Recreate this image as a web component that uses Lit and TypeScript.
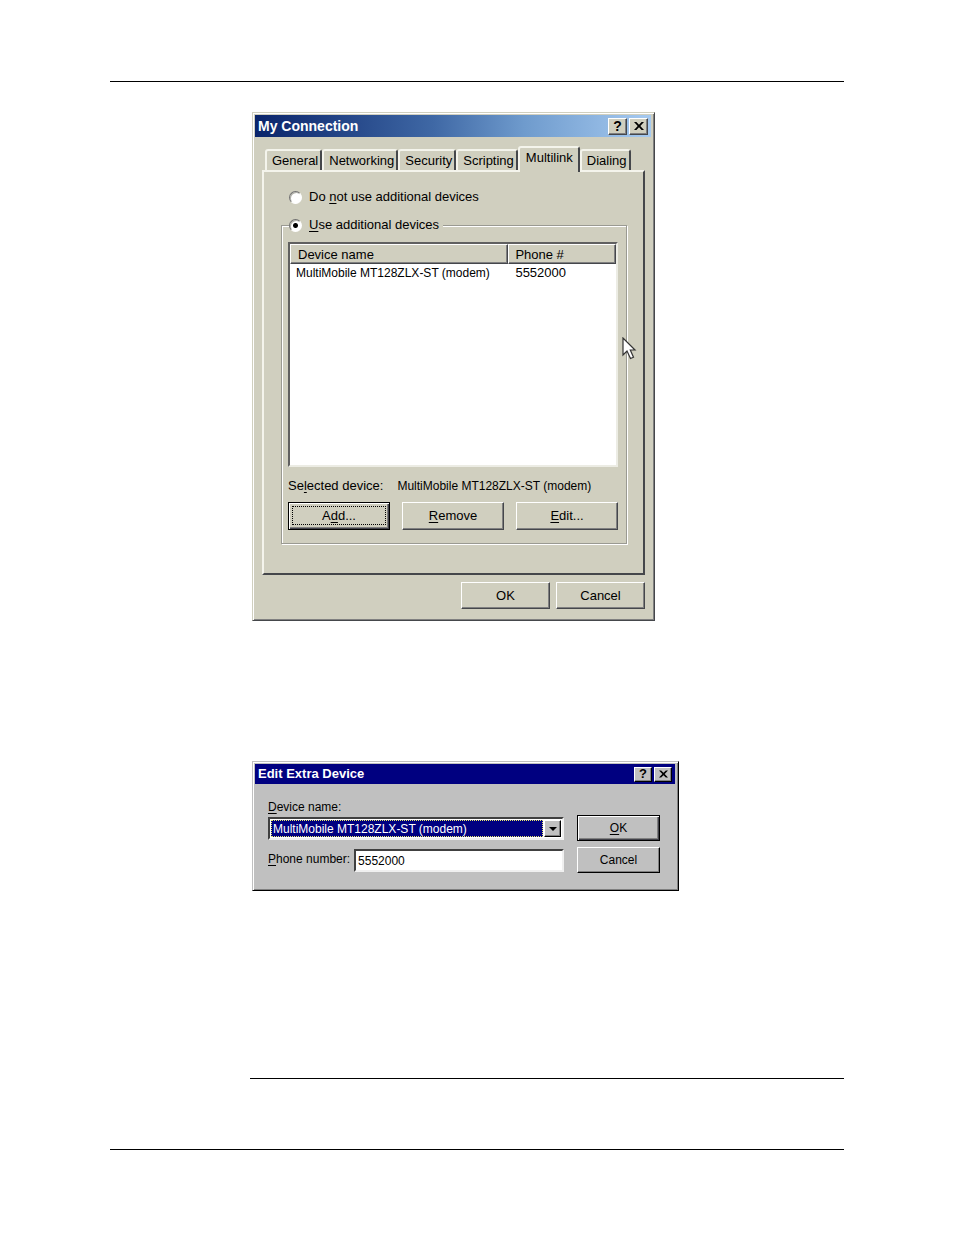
import { LitElement, html, css } from "lit";
import { customElement, state } from "lit/decorators.js";

const TABS = ["General", "Networking", "Security", "Scripting", "Multilink", "Dialing"];
const DEVICE = "MultiMobile MT128ZLX-ST (modem)";
const PHONE = "5552000";

const closeIcon = html`<svg class="x" viewBox="0 0 10 8" width="10" height="8" aria-hidden="true">
  <path d="M0 0h2.4L5 2.7 7.6 0H10L6.3 4 10 8H7.6L5 5.3 2.4 8H0L3.7 4z" fill="currentColor" /></svg>`;

const common = css`
  * { box-sizing: border-box; }
  :host {
    display: block;
    font-family: "Liberation Sans", Arial, sans-serif;
    color: #000;
  }
  button { font: inherit; color: inherit; margin: 0; padding: 0; }
  u { text-underline-offset: 2px; text-decoration-thickness: 1px; text-decoration-skip-ink: none; }
  .dialog {
    position: relative;
    background: var(--face);
    border: 1px solid;
    border-color: var(--face) var(--edge) var(--edge) var(--face);
    box-shadow: inset 1px 1px #fff, inset -1px -1px #808080;
    padding: 2px 3px 3px 2px;
  }
  .titlebar {
    display: flex;
    align-items: center;
    gap: 2px;
    color: #fff;
    font-weight: bold;
    padding: 0 3px;
  }
  .titlebar h2 { flex: 1; margin: 0; font-size: inherit; }
  .titlebar button {
    display: flex;
    align-items: center;
    justify-content: center;
    color: #000;
    font-size: 14px;
    font-weight: bold;
    line-height: 12px;
  }
  .raised {
    background: var(--face);
    border: 1px solid;
    border-color: #fff var(--edge) var(--edge) #fff;
    box-shadow: inset -1px -1px #808080;
    border-radius: 0;
  }
  .default {
    border-color: #000;
    box-shadow: inset 1px 1px #fff, inset -1px -1px #404048, inset -2px -2px #808080;
  }
`;

@customElement("connection-dialog")
class ConnectionDialog extends LitElement {
  @state() private active = "Multilink";
  @state() private extra = true;

  static styles = [common, css`
    :host { --face: #d0cfbf; --edge: #45474b; font-size: 13px; line-height: 16px; }
    .titlebar {
      height: 22px;
      font-size: 14px;
      background: linear-gradient(90deg, #0a246a, #3f68a5 45%, #6f9bcd 68%, #a6caf0);
    }
    .titlebar button { width: 19px; height: 17px; }
    .body { padding: 9px 6px 8px 7px; }
    .tabs { display: flex; align-items: flex-end; padding: 0 3px; }
    .tab {
      height: 21px;
      padding: 0 2px 0 5px;
      background: var(--face);
      border: 2px solid;
      border-color: #f4f4ec #45474b transparent #f4f4ec;
      border-width: 2px 2px 0 2px;
      border-radius: 3px 3px 0 0;
      white-space: nowrap;
    }
    .tab[aria-selected="true"] {
      position: relative;
      height: 26px;
      margin-bottom: -2px;
      padding: 0 5px 5px 6px;
      z-index: 1;
    }
    .pane {
      border: 2px solid;
      border-color: #f4f4ec #45474b #45474b #f4f4ec;
      padding: 17px 16px 29px 17px;
    }
    .option { display: flex; align-items: center; gap: 7px; width: max-content; }
    .lone { padding-left: 8px; margin-bottom: 12px; }
    input[type="radio"] {
      appearance: none;
      width: 13px;
      height: 13px;
      margin: 0;
      border: 1px solid;
      border-color: #707070 #fff #fff #707070;
      border-radius: 50%;
      background: #fff;
      box-shadow: inset 1px 1px #b0b0a8;
    }
    input[type="radio"]:checked { background: radial-gradient(circle, #000 2px, #fff 3px); }
    fieldset {
      min-width: 0;
      margin: 0;
      padding: 9px 8px 13px 6px;
      border: 1px solid #9a9a92;
      box-shadow: 1px 1px #fff, inset 1px 1px #fff;
    }
    legend { padding: 0 4px 0 0; margin-left: 1px; background: var(--face); }
    .list {
      height: 225px;
      background: #fff;
      border: 2px solid;
      border-color: #606060 #ecece4 #ecece4 #606060;
      overflow: hidden;
    }
    table { width: 100%; border-collapse: separate; border-spacing: 0; table-layout: fixed; }
    th { height: 20px; padding: 2px 7px 0; font-weight: normal; text-align: left; }
    th:first-child { width: 67%; }
    th + th { padding-left: 6px; }
    td { height: 17px; padding: 0 6px; white-space: nowrap; }
    td + td { padding-left: 7px; }
    .name { font-size: 12px; }
    .selected { display: flex; gap: 14px; margin: 11px 0 8px; white-space: nowrap; }
    .row { display: flex; gap: 12px; }
    .row button { flex: 1; height: 28px; }
    .focus { position: relative; }
    .focus::after {
      content: "";
      position: absolute;
      inset: 3px 3px 4px 3px;
      border: 1px dotted #000;
    }
    .actions { display: flex; justify-content: flex-end; gap: 6px; margin-top: 7px; }
    .actions button { width: 89px; height: 27px; }
    .cursor { position: absolute; left: 369px; top: 224px; }
  `];

  render() {
    return html`<section class="dialog" role="dialog" aria-labelledby="title">
      <header class="titlebar">
        <h2 id="title">My Connection</h2>
        <button class="raised" aria-label="Help">?</button>
        <button class="raised" aria-label="Close">${closeIcon}</button>
      </header>
      <div class="body">
        <div class="tabs" role="tablist">
          ${TABS.map((t) => html`<button class="tab" role="tab" aria-selected=${t === this.active ? "true" : "false"}
            @click=${() => (this.active = t)}>${t}</button>`)}
        </div>
        <div class="pane" role="tabpanel">
          <label class="option lone"><input type="radio" name="mode" .checked=${!this.extra}
            @change=${() => (this.extra = false)}><span>Do <u>n</u>ot use additional devices</span></label>
          <fieldset>
            <legend><label class="option"><input type="radio" name="mode" .checked=${this.extra}
              @change=${() => (this.extra = true)}><span><u>U</u>se additional devices</span></label></legend>
            <div class="list">
              <table>
                <thead><tr><th class="raised">Device name</th><th class="raised">Phone #</th></tr></thead>
                <tbody><tr><td class="name">${DEVICE}</td><td>${PHONE}</td></tr></tbody>
              </table>
            </div>
            <div class="selected"><span>Se<u>l</u>ected device:</span><span class="name">${DEVICE}</span></div>
            <div class="row">
              <button class="raised default focus">A<u>d</u>d...</button>
              <button class="raised"><u>R</u>emove</button>
              <button class="raised"><u>E</u>dit...</button>
            </div>
          </fieldset>
        </div>
        <div class="actions">
          <button class="raised">OK</button>
          <button class="raised">Cancel</button>
        </div>
      </div>
      <svg class="cursor" width="15" height="23" viewBox="0 0 15 23" aria-hidden="true">
        <path d="M1 1v17l4-4 3.5 7.5 3-1.3L8.300 13H13z" fill="#fff" stroke="#333" stroke-width="1.200" />
      </svg>
    </section>`;
  }
}

@customElement("device-dialog")
class DeviceDialog extends LitElement {
  static styles = [common, css`
    :host { --face: #c0c0c0; --edge: #000; font-size: 12px; line-height: 16px; }
    .titlebar { height: 20px; font-size: 13px; background: #000080; }
    .titlebar button { width: 18px; height: 15px; font-size: 13px; }
    .titlebar .x { width: 9px; height: 8px; }
    .body { display: flex; gap: 13px; padding: 15px 15px 14px 13px; }
    .fields { flex: 1; min-width: 0; }
    .fields label { white-space: nowrap; }
    .sunken {
      border: 2px solid;
      border-color: #404040 #f0f0f0 #f0f0f0 #404040;
      border-radius: 0;
      background: #fff;
    }
    .combo { display: flex; height: 23px; margin: 2px 0 9px; padding: 1px; }
    select {
      appearance: none;
      flex: 1;
      min-width: 0;
      border: 1px dotted #e8e870;
      border-radius: 0;
      outline: 0;
      margin: 0;
      padding: 0 1px;
      background: #000080;
      color: #fff;
      font: inherit;
    }
    .drop { display: flex; align-items: center; justify-content: center; width: 17px; margin-left: 1px; }
    .phone { display: flex; align-items: flex-start; gap: 4px; }
    .phone label { padding-top: 2px; }
    .phone input { flex: 1; min-width: 0; height: 23px; padding: 0 2px; font: inherit; color: #000; }
    .buttons { display: flex; flex-direction: column; gap: 6px; width: 83px; padding-top: 16px; }
    .buttons button { height: 26px; }
  `];

  render() {
    return html`<section class="dialog" role="dialog" aria-labelledby="title">
      <header class="titlebar">
        <h2 id="title">Edit Extra Device</h2>
        <button class="raised" aria-label="Help">?</button>
        <button class="raised" aria-label="Close">${closeIcon}</button>
      </header>
      <div class="body">
        <div class="fields">
          <label for="device"><u>D</u>evice name:</label>
          <div class="combo sunken">
            <select id="device"><option>${DEVICE}</option></select>
            <span class="drop raised"><svg width="8" height="4" viewBox="0 0 8 4" aria-hidden="true"><path d="M0 0h8L4 4z" /></svg></span>
          </div>
          <div class="phone">
            <label for="phone"><u>P</u>hone number:</label>
            <input id="phone" class="sunken" type="text" .value=${PHONE}>
          </div>
        </div>
        <div class="buttons">
          <button class="raised default"><u>O</u>K</button>
          <button class="raised">Cancel</button>
        </div>
      </div>
    </section>`;
  }
}

@customElement("app-root")
class AppRoot extends LitElement {
  static styles = css`
    :host { display: block; background: #fff; }
    .page { padding: 81px 110px 85px; }
    hr { margin: 0; border: 0; height: 1px; background: #000; }
    .content { padding: 30px 0 187px 142px; }
    connection-dialog { max-width: 403px; margin-bottom: 140px; }
    device-dialog { max-width: 427px; }
    .section-end { margin: 0 0 70px 140px; }
  `;

  render() {
    return html`<main class="page">
      <hr>
      <div class="content">
        <connection-dialog></connection-dialog>
        <device-dialog></device-dialog>
      </div>
      <hr class="section-end">
      <hr>
    </main>`;
  }
}
